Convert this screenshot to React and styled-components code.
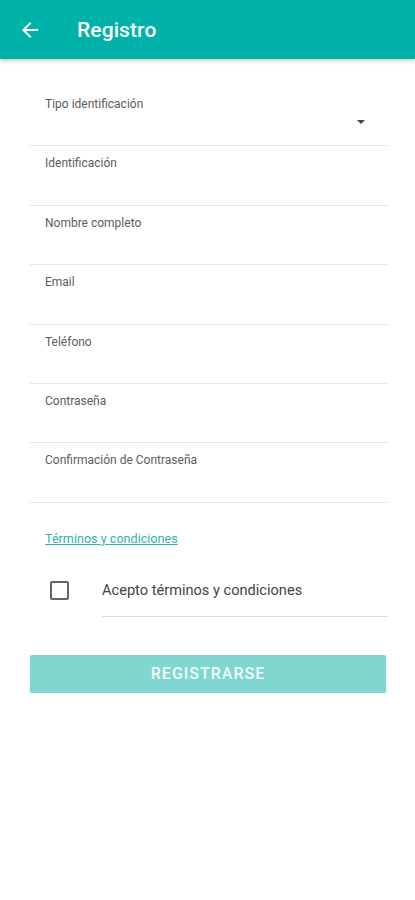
import React from 'react';
import styled, { createGlobalStyle } from 'styled-components';

const GlobalStyle = createGlobalStyle`
  body {
    margin: 0;
    background: #ffffff;
    font-family: Roboto, 'Liberation Sans', sans-serif;
  }
`;

const Header = styled.header`
  height: 59px;
  background-color: #00b2a8;
  display: flex;
  align-items: center;
  box-shadow: 0 2px 4px rgba(0, 0, 0, 0.22);
  position: relative;
  z-index: 1;
`;

const BackButton = styled.button`
  border: none;
  background: none;
  padding: 0;
  margin-left: 18px;
  width: 24px;
  height: 24px;
  display: flex;
  cursor: pointer;
`;

const Title = styled.h1`
  margin: 0 0 0 35px;
  color: #ffffff;
  font-size: 21px;
  font-weight: 500;
  letter-spacing: 0.1px;
`;

const Form = styled.form`
  padding: 28px 27px 0 30px;
`;

const Field = styled.div`
  height: 58.4px;
  border-bottom: 1px solid #e6e6e6;
  display: flex;
  flex-direction: column;
  box-sizing: content-box;
`;

const Label = styled.label`
  padding: 10px 0 0 15px;
  font-size: 12px;
  line-height: 14px;
  color: #5c5c5c;
`;

const SelectArea = styled.div`
  flex: 1;
  display: flex;
  align-items: flex-start;
  justify-content: flex-end;
  padding: 9px 23px 0 0;
`;

const Caret = styled.span`
  width: 0;
  height: 0;
  border-left: 4px solid transparent;
  border-right: 4px solid transparent;
  border-top: 4px solid #444444;
`;

const TermsLink = styled.a`
  display: inline-block;
  margin: 29px 0 0 15px;
  font-size: 12.6px;
  line-height: 14px;
  color: #2fb5a8;
  text-decoration: underline;
`;

const CheckRow = styled.div`
  display: flex;
  align-items: flex-start;
  margin-top: 25px;
`;

const CheckCell = styled.div`
  width: 72px;
  display: flex;
  padding-top: 9px;
`;

const Box = styled.span`
  margin-left: 20px;
  width: 15px;
  height: 15px;
  border: 2px solid #666666;
  border-radius: 2px;
`;

const CheckLabel = styled.div`
  flex: 1;
  padding: 9px 0 17px;
  font-size: 14.6px;
  line-height: 18px;
  color: #444444;
  border-bottom: 1px solid #dcdcdc;
`;

const Submit = styled.button`
  margin: 38px 2px 0 0;
  width: calc(100% - 2px);
  height: 38px;
  border: none;
  border-radius: 2px;
  background-color: #7fd7cf;
  color: #f2fbfa;
  font-family: Roboto, 'Liberation Sans', sans-serif;
  font-size: 16px;
  font-weight: 500;
  letter-spacing: 1px;
  box-shadow: 0 1px 3px rgba(0, 0, 0, 0.12);
`;

const fields = [
  'Identificación',
  'Nombre completo',
  'Email',
  'Teléfono',
  'Contraseña',
  'Confirmación de Contraseña',
];

export default function App() {
  return (
    <>
      <GlobalStyle />
      <Header>
        <BackButton aria-label="Volver">
          <svg width="24" height="24" viewBox="0 0 24 24">
            <path fill="#ffffff" d="M20 11H7.83l5.59-5.59L12 4l-8 8 8 8 1.41-1.41L7.83 13H20v-2z" />
          </svg>
        </BackButton>
        <Title>Registro</Title>
      </Header>
      <Form>
        <Field>
          <Label>Tipo identificación</Label>
          <SelectArea>
            <Caret />
          </SelectArea>
        </Field>
        {fields.map(name => (
          <Field key={name}>
            <Label>{name}</Label>
          </Field>
        ))}
        <TermsLink>Términos y condiciones</TermsLink>
        <CheckRow>
          <CheckCell>
            <Box />
          </CheckCell>
          <CheckLabel>Acepto términos y condiciones</CheckLabel>
        </CheckRow>
        <Submit type="button">REGISTRARSE</Submit>
      </Form>
    </>
  );
}
